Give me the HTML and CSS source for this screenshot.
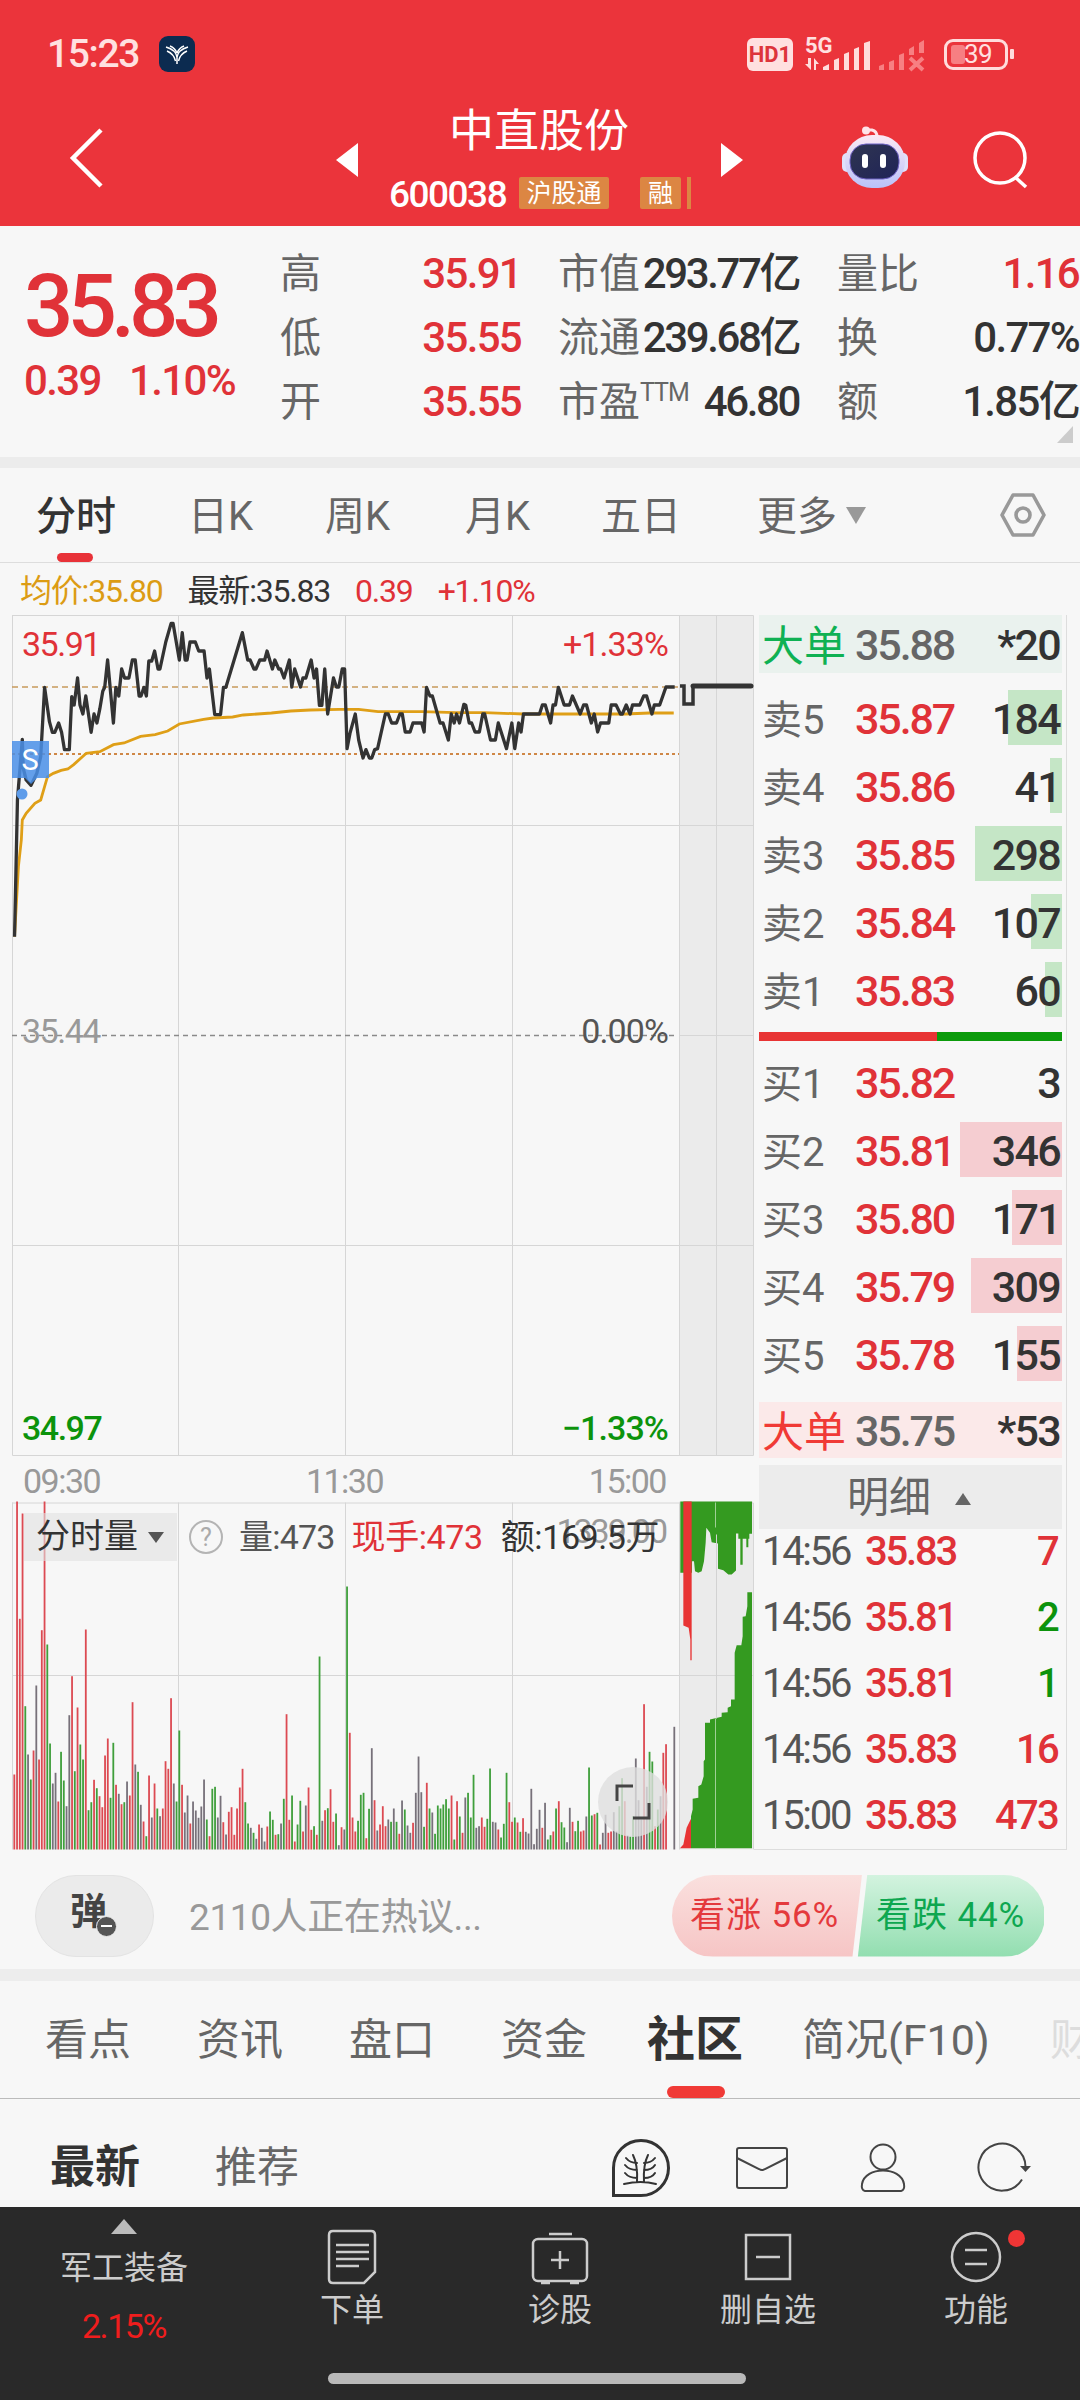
FILE: index.html
```html
<!DOCTYPE html>
<html lang="zh-CN">
<head>
    <meta charset="UTF-8">
    <meta name="viewport" content="width=device-width, initial-scale=1.0">
    <title>中直股份 600038</title>
    <link rel="stylesheet" href="styles.css">
</head>
<body>
    <header class="header">
        <div class="status">
            <span class="clock">15:23</span>
            <svg class="app-icon" width="36" height="36" viewBox="0 0 36 36">
                <rect width="36" height="36" rx="9" fill="#0c2b50"/>
                <g fill="none" stroke="#fff" stroke-width="1.500">
                    <path d="M18 28V21Q17 14 7 11M16.500 25Q15 18 8 15M18 17Q16 12 11 10"/>
                    <path d="M18 21Q19 14 29 11M19.500 25Q21 18 28 15M18 17Q20 12 25 10"/>
                </g>
            </svg>
            <span class="hd">HD1</span>
            <svg class="signal" width="124" height="36" viewBox="0 0 124 36">
                <text x="0" y="17" class="net">5G</text>
                <g fill="#ffdcdc">
                    <path d="M0 28h3v-6h3v12zM9 34v-12l5 6h-3v6z"/>
                    <path d="M18 34v-3l6-3v6zM29 34v-10l5-2v12zM39 34v-16l5-2v18zM49 34v-21l5-2v23zM59 34v-27l6-2v29z"/>
                </g>
                <g fill="#f77f82">
                    <path d="M74 34v-4l5-2v6zM84 34v-8l5-2v10zM94 34v-15l5-2v17zM104 19v-6l5-3v9zM114 17v-10l5-3v13z"/>
                    <path d="M105 22l13 12M118 22l-13 12" stroke="#f77f82" stroke-width="4"/>
                </g>
            </svg>
            <span class="battery"><span class="charge"></span>39</span>
            <span class="nub"></span>
        </div>
        <nav class="nav">
            <svg class="back" width="36" height="62" viewBox="0 0 36 62"><path d="M32 3L4 31l28 28" fill="none" stroke="#fff" stroke-width="4.500"/></svg>
            <svg class="prev" width="23" height="34" viewBox="0 0 23 34"><path d="M0 17L22 0v34z" fill="#fff"/></svg>
            <div class="stock">
                <h1>中直股份</h1>
                <div class="code">
                    <span>600038</span>
                    <em>沪股通</em>
                    <em class="rong">融</em>
                    <i></i>
                </div>
            </div>
            <svg class="next" width="23" height="34" viewBox="0 0 23 34"><path d="M0 0l22 17L0 34z" fill="#fff"/></svg>
            <svg class="robot" width="68" height="64" viewBox="0 0 68 64">
                <defs>
                    <linearGradient id="shell" x1="0" y1="0" x2="0" y2="1"><stop offset="0" stop-color="#fbe9f4"/><stop offset="1" stop-color="#b9c2fa"/></linearGradient>
                    <linearGradient id="face" x1="0" y1="0" x2="1" y2="1"><stop offset="0" stop-color="#2f3550"/><stop offset="1" stop-color="#1f2358"/></linearGradient>
                </defs>
                <path d="M25 4h6q5 1 5 7" fill="none" stroke="#ffe3e8" stroke-width="3"/>
                <circle cx="25" cy="4.500" r="4" fill="#ffe3e8"/>
                <rect x="1" y="27" width="10" height="19" rx="5" fill="#dfe0fa"/>
                <rect x="57" y="27" width="10" height="19" rx="5" fill="#dfe0fa"/>
                <rect x="4" y="9" width="60" height="53" rx="27" fill="url(#shell)"/>
                <rect x="9" y="18" width="49" height="35" rx="16" fill="url(#face)" stroke="#6f62c4"/>
                <rect x="21" y="28" width="6" height="14" rx="3" fill="#fff"/>
                <rect x="39" y="28" width="6" height="14" rx="3" fill="#fff"/>
            </svg>
            <svg class="search" width="56" height="58" viewBox="0 0 56 58"><g fill="none" stroke="#fff" stroke-width="3.500"><circle cx="27" cy="27" r="25"/><path d="M42 46l11 10"/></g></svg>
        </nav>
    </header>

    <section class="quote">
        <div class="price">
            <strong>35.83</strong>
            <div class="change"><span>0.39</span><span>1.10%</span></div>
        </div>
        <dl class="stat col-a">
            <dt>高</dt><dd class="red">35.91</dd>
            <dt>低</dt><dd class="red">35.55</dd>
            <dt>开</dt><dd class="red">35.55</dd>
        </dl>
        <dl class="stat col-b">
            <dt>市值</dt><dd>293.77亿</dd>
            <dt>流通</dt><dd>239.68亿</dd>
            <dt>市盈<sup>TTM</sup></dt><dd>46.80</dd>
        </dl>
        <dl class="stat col-c">
            <dt>量比</dt><dd class="red">1.16</dd>
            <dt>换</dt><dd>0.77%</dd>
            <dt>额</dt><dd>1.85亿</dd>
        </dl>
        <span class="corner"></span>
    </section>

    <nav class="periods">
        <span class="active">分时</span>
        <span>日K</span>
        <span>周K</span>
        <span>月K</span>
        <span>五日</span>
        <span>更多<i class="down"></i></span>
        <svg width="46" height="44" viewBox="0 0 46 44"><g fill="none" stroke="#999" stroke-width="3.600"><path d="M13 2h20l11 20-11 20H13L2 22z" stroke-linejoin="round"/><circle cx="23" cy="22" r="7"/></g></svg>
    </nav>

    <div class="legend">
        <span class="gold">均价:35.80</span>
        <span>最新:35.83</span>
        <span class="red">0.39</span>
        <span class="red">+1.10%</span>
    </div>

    <main class="market">
        <div class="charts">
            <div class="price-chart">
                <svg width="742" height="841" viewBox="12 15 742 841">
                    <rect x="679" y="15" width="74" height="841" fill="#ebebeb"/>
                    <path class="grid" d="M12 15.500H753.500V855.500H12.500V15M178.500 15V855M345.500 15V855M512.500 15V855M679.500 15V855M716.500 15V855M12 225.500H753M12 645.500H753M680 435.500H753"/>
                    <path d="M12 87H679" stroke="#c79a5c" stroke-width="1.500" stroke-dasharray="6 4"/>
                    <path d="M12 154H679" stroke="#cf8746" stroke-width="2" stroke-dasharray="3 3"/>
                    <path d="M12 435.500H677" stroke="#8a8a8a" stroke-width="1.500" stroke-dasharray="5 4"/>
                    <g transform="scale(.4847 .33333)">
                        <polyline class="avg" points="30,1010 38,800 44,720 46,660 54,640 72,610 84,600 92,560 98,530 110,520 126,511 140,507 152,494 178,460 206,455 234,434 256,429 290,409 320,404 346,393 370,372 420,358 440,354 480,351 502,345 560,339 600,333 640,330 700,328 740,328 780,335 870,335 940,338 1000,338 1080,342 1290,342 1340,339 1390,339"/>
                        <polyline class="last" points="30,1010 36,600 46,418 48,505 54,540 64,556 76,520 84,470 92,262 102,365 108,397 113,397 121,369 127,397 133,449 143,449 148,290 153,315 160,234 165,315 171,342 177,288 188,397 194,342 200,369 206,326 212,274 216,262 222,180 234,369 239,262 245,288 251,207 257,234 266,234 273,180 279,180 287,288 291,288 297,262 302,288 307,183 313,183 319,153 326,207 330,207 342,126 353,70 357,70 370,180 376,98 382,180 386,180 392,126 403,126 410,153 421,153 427,234 432,207 443,344 455,344 461,262 466,262 500,98 511,180 516,180 524,207 528,207 536,180 546,180 551,153 562,207 567,180 575,207 579,207 586,234 597,180 602,261 608,207 620,261 625,234 631,234 642,180 648,234 653,207 659,316 664,316 670,207 676,342 688,234 694,261 699,261 706,207 711,207 716,446 722,400 733,342 740,420 749,474 755,449 762,474 767,474 773,449 779,446 795,342 801,342 808,369 818,369 825,342 830,342 836,396 846,396 852,369 870,369 875,396 880,262 887,288 892,288 908,369 914,369 925,420 931,342 937,369 942,342 948,369 957,313 961,316 968,369 973,369 980,396 989,396 996,342 1000,342 1012,420 1022,420 1028,369 1045,446 1056,369 1062,446 1070,369 1075,396 1080,342 1113,342 1119,315 1125,315 1136,369 1141,315 1146,315 1152,262 1164,315 1175,315 1181,288 1197,342 1204,315 1210,315 1220,369 1226,342 1233,396 1239,369 1256,369 1261,315 1271,315 1280,342 1284,342 1292,315 1300,342 1305,315 1320,315 1328,288 1334,288 1345,342 1350,315 1361,315 1374,261 1392,261"/>
                    </g>
                    <path d="M680 86h4v18h9V86" fill="none" stroke="#333" stroke-width="3.500"/>
                    <path d="M693 86h58" stroke="#333" stroke-width="5" stroke-linecap="round"/>
                    <path d="M12 141h37v37H37l-6 6-6-6H12z" fill="#4a8fe8" opacity=".85"/>
                    <circle cx="22" cy="194" r="5.500" fill="#5e9cea"/>
                    <text x="30" y="170" class="sell-mark">S</text>
                </svg>
                <div class="axis">
                    <span class="red">35.91</span><span class="red">+1.33%</span>
                    <span class="gray">35.44</span><span class="dark">0.00%</span>
                    <span class="green">34.97</span><span class="green">−1.33%</span>
                </div>
            </div>
            <div class="times"><span>09:30</span><span>11:30</span><span>15:00</span></div>
            <div class="volume-chart">
                <svg width="742" height="348" viewBox="12 1502.500 742 348">
                    <rect x="679" y="1502" width="74" height="348" fill="#ebebeb"/>
                    <path class="grid" d="M12 1503.500H753.500V1850M12.500 1503V1850M178.500 1503V1850M345.500 1503V1850M512.500 1503V1850M679.500 1503V1850M12 1676H753"/>
                    <g id="bars"></g>
                    <g transform="translate(370 1380) scale(.33333)">
                        <path fill="#349a20" d="M931 366H1146V463H1138V478H1135V503H1129V478H1118V556H1111V478H1105V462H1098V573L1085 585H1075L1060 572 1044 568V492L1025 488 1020 460 1009 445 1007 490 1002 545 995 575 985 580 975 575 972 545H966V580H931Z"/>
                        <path fill="#e83434" d="M940 366H965V842H961V780L956 745 940 738Z"/>
                        <path fill="#349a20" d="M1146 1406V638H1132V680L1127 710 1118 712V770L1114 797H1100L1094 820V960H1083V980L1073 985V998L1055 1000V1012L1020 1020V1030H1005V1140L1001 1145V1190L994 1215 985 1220V1255L968 1258V1290L963 1310V1406Z"/>
                        <path fill="#e83434" d="M930 1406L940 1395 950 1345 963 1318V1406Z"/>
                    </g>
                    <path d="M715.500 1503V1528M715.500 1719V1849" stroke="#9fd095"/>
                    <path d="M716.500 1535V1719" stroke="#d2d2d2"/>
                </svg>
                <div class="volume-info">
                    <span class="picker">分时量<i class="down"></i></span>
                    <span class="help">?</span>
                    <span class="dark">量:473</span>
                    <span class="red">现手:473</span>
                    <span class="amount">额:169.5万</span>
                </div>
                <span class="volume-max">1339.00</span>
                <span class="expand"><svg width="36" height="36" viewBox="0 0 36 36"><path d="M2 17V2h16M34 19v15H18" fill="none" stroke="#444" stroke-width="3"/></svg></span>
            </div>
        </div>

        <aside class="book">
            <div class="big sell"><span>大单</span><b>35.88</b><u>*20</u></div>
            <div class="asks" id="asks"></div>
            <div class="ratio"><i></i></div>
            <div class="bids" id="bids"></div>
            <div class="big buy"><span>大单</span><b>35.75</b><u>*53</u></div>
            <div class="detail">明细<i class="up"></i></div>
            <div class="ticks">
                <div><span>14:56</span><b>35.83</b><u class="red">7</u></div>
                <div><span>14:56</span><b>35.81</b><u class="green">2</u></div>
                <div><span>14:56</span><b>35.81</b><u class="green">1</u></div>
                <div><span>14:56</span><b>35.83</b><u class="red">16</u></div>
                <div><span>15:00</span><b>35.83</b><u class="red">473</u></div>
            </div>
        </aside>
    </main>

    <section class="chat">
        <span class="danmu">弹<i></i></span>
        <span class="hint">2110人正在热议...</span>
        <div class="vote">
            <span class="up-vote">看涨 56%</span>
            <span class="down-vote">看跌 44%</span>
        </div>
    </section>

    <nav class="sections">
        <span>看点</span>
        <span>资讯</span>
        <span>盘口</span>
        <span>资金</span>
        <span class="active">社区</span>
        <span>简况(F10)</span>
        <span class="fade">财</span>
    </nav>

    <div class="feed">
        <b>最新</b>
        <span>推荐</span>
        <svg class="tree" width="58" height="58" viewBox="0 0 58 58"><g fill="none" stroke="#333" stroke-linecap="round"><path d="M1.500 56.500V29A27.500 27.500 0 1 1 29 56.500Z" stroke-width="3"/><path stroke-width="2" d="M12 45q17-4 32 0M25 43q1-17-4-27M32 43q-1-17 4-27M25 24q-7 0-11-5M25 31q-8 0-12-5M25 39q-8 0-12-5M32 24q7 0 11-5M32 31q8 0 11-5M32 39q8 0 11-5"/></g></svg>
        <svg class="mail" width="52" height="42" viewBox="0 0 52 42"><g fill="none" stroke="#444" stroke-width="2"><rect x="1" y="1" width="50" height="40" rx="2"/><path d="M1 11l22 11q3 2 6 0l22-11"/></g></svg>
        <svg class="user" width="46" height="50" viewBox="0 0 46 50"><g fill="none" stroke="#444" stroke-width="2"><circle cx="23" cy="14" r="12.500"/><path d="M5 48q-4-1-3-7c3-18 39-18 42 0q1 6-3 7z"/></g></svg>
        <svg class="reload" width="54" height="50" viewBox="0 0 54 50"><path d="M45 36.500A23.500 23.500 0 1 1 48.500 25" fill="none" stroke="#444" stroke-width="2"/><path d="M43 23h11l-5.500 6z" fill="#444"/></svg>
    </div>

    <footer class="tabbar">
        <div class="items">
            <div class="item index"><i class="up"></i><span>军工装备</span><b>2.15%</b></div>
            <div class="item">
                <svg width="50" height="56" viewBox="0 0 50 56"><g fill="none" stroke="#ccc" stroke-width="2.500"><path d="M6 2h38q4 0 4 4v37L37 54H6q-4 0-4-4V6q0-4 4-4z"/><path d="M9 16h33M9 23h33M9 30h33M9 37h23"/></g></svg>
                <span>下单</span>
            </div>
            <div class="item">
                <svg width="58" height="56" viewBox="0 0 58 56"><g fill="none" stroke="#ccc" stroke-width="2.500"><rect x="2" y="10" width="54" height="42" rx="5"/><path d="M18 5h23M29 22v18M20 31h18M10 54h9M39 54h9"/></g></svg>
                <span>诊股</span>
            </div>
            <div class="item">
                <svg width="50" height="56" viewBox="0 0 50 56"><g fill="none" stroke="#ccc" stroke-width="2.500"><rect x="3" y="6" width="44" height="44"/><path d="M13 28h24"/></g></svg>
                <span>删自选</span>
            </div>
            <div class="item">
                <svg width="52" height="56" viewBox="0 0 52 56"><g fill="none" stroke="#ccc" stroke-width="2.500"><circle cx="26" cy="28" r="24"/><path d="M15 21h22M15 35h22"/></g></svg>
                <span>功能</span>
                <i class="dot"></i>
            </div>
        </div>
        <div class="home"></div>
    </footer>

    <script src="main.js"></script>
</body>
</html>
```
FILE: styles.css
```css
*{
    box-sizing: border-box;
}
body{
    margin: 0;
    width: 1080px;
    height: 2400px;
    overflow: hidden;
    background: #f7f7f7;
    color: #333;
    font-family: Roboto, "Noto Sans CJK SC", sans-serif;
}
h1, dl, dd{
    margin: 0;
}
svg{
    display: block;
    flex: none;
    overflow: visible;
}
i, em, u{
    font-style: normal;
    text-decoration: none;
}
.red{
    color: #e03238;
}
.green{
    color: #0c930c;
}
.gray{
    color: #999;
}
.dark{
    color: #555;
}
.gold{
    color: #dc9c14;
}
.down{
    display: inline-block;
    border: 10px solid transparent;
    border-top: 17px solid #999;
    border-bottom: 0;
}
.up{
    display: inline-block;
    border: 8px solid transparent;
    border-bottom: 12px solid #666;
    border-top: 0;
}

/* header */
.header{
    height: 226px;
    background: #eb343b;
    color: #fff;
}
.status{
    display: flex;
    align-items: center;
    height: 108px;
    padding-left: 47px;
    color: #ffe0e0;
}
.clock{
    width: 112px;
    font-size: 39px;
    font-weight: 500;
    letter-spacing: -1.4px;
}
.hd{
    width: 46px;
    height: 33px;
    margin-left: 552px;
    border-radius: 6px;
    background: #ffe0e0;
    color: #dd343b;
    font: 700 22px/33px Roboto;
    text-align: center;
}
.signal{
    margin-left: 12px;
}
.net{
    font: 700 22px Roboto;
    fill: #ffe0e0;
}
.battery{
    display: flex;
    align-items: center;
    width: 64px;
    height: 31px;
    margin-left: 15px;
    padding-left: 4px;
    border: 3px solid #ffdcdc;
    border-radius: 9px;
    font-size: 26px;
    letter-spacing: -.6px;
}
.charge{
    width: 14px;
    height: 19px;
    margin-right: -1px;
    border-radius: 3px;
    background: #f77f82;
}
.nub{
    width: 4px;
    height: 10px;
    margin-left: 2px;
    border-radius: 1px;
    background: #ffdcdc;
}
.nav{
    display: flex;
    height: 118px;
}
.back{
    margin: 19px 0 0 69px;
}
.prev{
    margin: 35px 0 0 231px;
}
.stock{
    width: 304px;
    margin-left: 30px;
}
.stock h1{
    height: 66px;
    padding-left: 60px;
    font-size: 45px;
    font-weight: 400;
    line-height: 47px;
}
.code{
    display: flex;
    height: 32px;
    font-size: 37px;
    font-weight: 500;
    line-height: 36px;
    margin-top: 3px;
}
.code span{
    width: 130px;
    letter-spacing: -1.5px;
}
.code em{
    width: 90px;
    height: 32px;
    background: #dc8643;
    font-size: 25px;
    font-weight: 400;
    line-height: 33px;
    text-align: center;
    border-radius: 2px;
}
.code .rong{
    width: 41px;
    margin-left: 31px;
}
.code i{
    width: 4px;
    margin-left: 6px;
    background: #dc8643;
}
.next{
    margin: 35px 0 0 28px;
}
.robot{
    margin: 18px 0 0 97px;
}
.search{
    margin: 23px 0 0 64px;
}

/* quote */
.quote{
    position: relative;
    display: flex;
    height: 231px;
    padding-top: 16px;
    font-size: 42px;
    font-weight: 500;
}
.price{
    width: 280px;
    padding-left: 24px;
    color: #e03238;
}
.price strong{
    display: block;
    height: 95px;
    padding-top: 14px;
    font-size: 87px;
    font-weight: 500;
    line-height: 100px;
    letter-spacing: -6px;
}
.change{
    display: flex;
    gap: 28px;
    margin-top: 24px;
    line-height: 40px;
    letter-spacing: -1.6px;
}
.stat{
    display: grid;
    grid-template-columns: 83px 1fr;
    grid-auto-rows: 64px;
    line-height: 64px;
    white-space: nowrap;
}
.stat dt{
    color: #666;
    font-size: 41px;
    font-weight: 400;
}
.stat dd{
    text-align: right;
    letter-spacing: -1.7px;
}
.stat sup{
    font-size: 25px;
    line-height: 0;
    letter-spacing: -1px;
}
.col-a{
    width: 241px;
}
.col-b{
    width: 241px;
    margin-left: 37px;
}
.col-b dd{
    letter-spacing: -2.4px;
}
.col-c{
    width: 242px;
    margin-left: 38px;
}
.corner{
    position: absolute;
    right: 7px;
    bottom: 14px;
    border-left: 16px solid transparent;
    border-bottom: 17px solid #ccc;
}

/* period tabs */
.periods{
    display: grid;
    grid-template-columns: 152px 137px 140px 136px 156px 243px auto;
    align-items: center;
    height: 106px;
    padding-left: 36px;
    border-top: 11px solid #ececec;
    border-bottom: 1px solid #ddd;
    font-size: 40px;
    color: #666;
}
.periods span{
    height: 94px;
    line-height: 97px;
}
.periods .down{
    margin: 0 0 6px 9px;
}
.periods .active{
    color: #333;
    font-weight: 500;
}
.periods .active::after{
    content: "";
    display: block;
    width: 36px;
    height: 9px;
    margin: -12px 0 0 21px;
    border-radius: 5px;
    background: #e83238;
}
.legend{
    display: flex;
    gap: 25px;
    height: 52px;
    padding-left: 20px;
    font-size: 32px;
    line-height: 57px;
    letter-spacing: -1.2px;
}

/* charts */
.market{
    display: flex;
    height: 1235px;
    padding-left: 12px;
}
.charts{
    width: 742px;
}
.grid{
    fill: none;
    stroke: #d6d6d6;
}
.avg, .last{
    fill: none;
    stroke: #df9f17;
    stroke-width: 2.8px;
    vector-effect: non-scaling-stroke;
}
.last{
    stroke: #333;
    stroke-width: 3.3px;
    stroke-linejoin: round;
}
.sell-mark{
    fill: #fff;
    font: 29px Roboto;
    text-anchor: middle;
}
.price-chart, .volume-chart{
    position: relative;
}
.axis{
    position: absolute;
    inset: 0;
    width: 667px;
    padding: 10px 11px 0 10px;
    display: grid;
    grid-template-columns: 1fr 1fr;
    grid-template-rows: 387px 397px 38px;
    font-size: 34px;
    line-height: 38px;
    letter-spacing: -1.5px;
}
.axis span:nth-child(even){
    text-align: right;
    letter-spacing: -.9px;
}
.axis .green{
    font-weight: 500;
}
.times{
    display: flex;
    justify-content: space-between;
    width: 654px;
    height: 46px;
    padding-left: 11px;
    color: #999;
    font-size: 34px;
    line-height: 51px;
    letter-spacing: -1.5px;
}
.volume-info{
    position: absolute;
    top: 11px;
    left: 12px;
    display: flex;
    align-items: center;
    height: 48px;
    font-size: 34px;
    white-space: nowrap;
}
.picker{
    width: 153px;
    height: 48px;
    padding-left: 12px;
    background: rgba(225,225,225,.6);
    line-height: 47px;
}
.picker .down{
    margin: 0 0 5px 10px;
    border-width: 11px 8px 0;
    border-top-color: #555;
}
.help{
    width: 34px;
    height: 34px;
    margin: 0 16px 0 12px;
    border: 2px solid #b4b4b4;
    border-radius: 50%;
    color: #aaa;
    font-size: 25px;
    line-height: 31px;
    text-align: center;
}
.volume-info .dark, .volume-info .red, .amount{
    line-height: 48px;
    letter-spacing: -.8px;
}
.volume-info .red{
    margin: 0 18px 0 17px;
    letter-spacing: -.4px;
}
.volume-info .amount{
    letter-spacing: -.4px;
}
.volume-max{
    position: absolute;
    top: 9px;
    right: 88px;
    color: #999;
    font-size: 34px;
    letter-spacing: -2px;
    z-index: -1;
}
.expand{
    position: absolute;
    left: 586px;
    top: 265px;
    display: flex;
    align-items: center;
    justify-content: center;
    width: 70px;
    height: 70px;
    border-radius: 50%;
    background: rgba(222,222,222,.8);
}

/* order book */
.book{
    width: 313px;
    padding-left: 5px;
    border-right: 1px solid #ddd;
    border-bottom: 1px solid #ddd;
}
.book b, .book u{
    font-size: 43px;
    font-weight: 500;
    letter-spacing: -2.1px;
}
.book b{
    width: 106px;
    color: #e03238;
}
.book u{
    flex: 1;
    padding-right: 2px;
    text-align: right;
    letter-spacing: -1.7px;
}
.level, .big, .ticks div{
    display: flex;
    align-items: center;
    width: 303px;
    padding-left: 3px;
}
.level{
    position: relative;
    height: 55px;
    margin-bottom: 13px;
    padding-top: 2px;
    color: #666;
    font-size: 40px;
}
.level span, .big span{
    width: 93px;
}
.level span{
    margin-top: -3px;
}
.level u, .big u{
    position: relative;
    color: #333;
}
.level i{
    position: absolute;
    top: 0;
    right: 0;
    height: 55px;
    background: #c5e6c6;
}
.bids .level i{
    background: #f5cdd1;
}
.asks, .bids{
    display: flow-root;
}
.asks{
    padding-top: 17px;
}
.ratio{
    width: 303px;
    height: 9px;
    margin: 2px 0 13px;
    background: #0b9b0b;
}
.ratio i{
    display: block;
    width: 178px;
    height: 9px;
    background: #e83434;
}
.big{
    height: 58px;
    padding-top: 2px;
    background: #eaf2ee;
    color: #0fb153;
    font-size: 42px;
}
.big span{
    margin-top: -5px;
}
.big b{
    color: #666;
}
.big.buy{
    height: 56px;
    margin-top: 8px;
    background: #fbe9e9;
    color: #f03a36;
}
.detail{
    width: 303px;
    height: 64px;
    margin-top: 7px;
    padding-left: 88px;
    background: #ececec;
    color: #666;
    font-size: 42px;
    line-height: 66px;
}
.detail .up{
    margin: 0 0 7px 24px;
}
.ticks div{
    height: 66px;
    color: #555;
    font-size: 40px;
}
.ticks{
    margin-top: -11px;
}
.ticks span{
    width: 103px;
    letter-spacing: -2.3px;
}
.ticks b, .ticks u{
    font-size: 40px;
    letter-spacing: -2.2px;
}
.ticks u{
    padding-right: 4px;
    letter-spacing: -1.7px;
}

/* chat */
.chat{
    display: flex;
    align-items: center;
    height: 131px;
    padding: 0 35px 0 35px;
    border-bottom: 12px solid #ededed;
}
.danmu{
    position: relative;
    width: 119px;
    height: 82px;
    margin-top: 12px;
    border: 1px solid #e3e3e3;
    border-radius: 41px;
    background: #ebebeb;
    font-size: 37px;
    font-weight: 700;
    line-height: 73px;
    padding-left: 34px;
    color: #444;
}
.danmu i{
    position: absolute;
    left: 60px;
    top: 40px;
    width: 21px;
    height: 21px;
    border: 1px solid #ebebeb;
    border-radius: 50%;
    background: linear-gradient(#fff, #fff) center / 11px 2px no-repeat #555;
}
.hint{
    margin: 8px 0 0 35px;
    color: #999;
    font-size: 37px;
    letter-spacing: -.4px;
}
.vote{
    display: flex;
    width: 373px;
    height: 82px;
    margin: 12px 0 0 auto;
    border-radius: 41px;
    overflow: hidden;
    font-size: 35px;
    line-height: 82px;
}
.vote span{
    white-space: pre;
    letter-spacing: .9px;
}
.up-vote{
    width: 190px;
    padding-left: 18px;
    background: linear-gradient(#fae0de, #f6c5c5);
    color: #e4393c;
    clip-path: polygon(0 0, 100% 0, 95% 100%, 0 100%);
}
.down-vote{
    width: 188px;
    margin-left: -6px;
    padding-left: 20px;
    background: linear-gradient(#d3f3df, #92deb0);
    color: #0ea750;
    clip-path: polygon(6% 0, 100% 0, 100% 100%, 1% 100%);
}

/* section tabs */
.sections{
    display: grid;
    grid-template-columns: 152px 152px 152px 146px 155px 248px 60px;
    height: 118px;
    padding-left: 45px;
    border-bottom: 1px solid #bbb;
    color: #666;
    font-size: 43px;
    line-height: 118px;
    white-space: nowrap;
    overflow: hidden;
}
.sections .active{
    color: #333;
    font-size: 48px;
    font-weight: 700;
}
.sections .active::after{
    content: "";
    display: block;
    width: 58px;
    height: 12px;
    margin: -13px 0 0 20px;
    border-radius: 6px;
    background: #f03a36;
}
.sections .fade{
    color: #ddd;
}
.feed{
    display: flex;
    align-items: center;
    height: 108px;
    padding: 29px 0 0 50px;
    font-size: 42px;
}
.feed b{
    width: 165px;
    font-size: 45px;
    line-height: 50px;
}
.feed span{
    width: 397px;
    color: #666;
    line-height: 50px;
}
.mail{
    margin-left: 66px;
}
.user{
    margin-left: 72px;
}
.reload{
    margin-left: 71px;
}

/* bottom bar */
.tabbar{
    height: 193px;
    background: #292929;
    color: #ccc;
}
.items{
    display: grid;
    grid-template-columns: 248px repeat(4, 208px);
    height: 166px;
}
.item{
    position: relative;
    display: flex;
    flex-direction: column;
    align-items: center;
    padding-top: 22px;
    font-size: 32px;
    line-height: 40px;
    white-space: nowrap;
}
.item svg{
    margin-bottom: 5px;
}
.index{
    padding-top: 12px;
}
.index .up{
    border-width: 0 13px 15px;
    border-bottom-color: #bbb;
}
.index span{
    margin-top: 14px;
}
.index b{
    margin-top: 18px;
    color: #f01d1d;
    font-size: 34px;
    font-weight: 400;
    letter-spacing: -1.4px;
}
.dot{
    position: absolute;
    left: 136px;
    top: 23px;
    width: 17px;
    height: 17px;
    border-radius: 50%;
    background: #f03535;
}
.home{
    width: 418px;
    height: 11px;
    margin-left: 328px;
    border-radius: 6px;
    background: #b9b9b9;
}
```
FILE: main.js
```js
// colour and top edge of every minute bar, r = up, g = down, k = flat
const minutes = `r1185 r366 r718 r402 g980 k1125 g1200 r1113 k918 r1140 r752 r366 g795 g1092 k1212 k1180 r1266 g1117 g1203 k1280
k1007 r890 g1175 r984 g1095 g1140 r750 g1292 g1268 r1201 g1226 r1250 r1283 r1128 r1077 g1255 g1090 r1216 k1243 r1274
g1268 k1206 r1248 r968 k1155 g1177 k1276 r1326 g1370 r1188 k1314 r1212 g1287 k1310 r1287 r1145 r1168 r956 k1212 g1266
g1053 r1216 k1299 k1248 r1332 k1266 k1293 k1315 k1281 k1200 g1320 r1370 g1228 g1222 k1314 k1249 r1328 k1365 r1297 r1283
r1366 r1287 r1224 r1168 g1268 g1332 k1345 g1360 k1378 r1335 k1345 k1386 r1341 g1296 g1321 r1366 g1364 k1332 g1258 r1004
r1321 g1248 r1386 g1335 g1264 r1356 k1278 r1224 r1351 g1340 r1366 g831 k1324 r1292 g1286 r1229 r1327 g1302 k1397 r1343
k1350 g621 r1060 r1314 r1356 g1324 g1246 g1240 r1376 g1288 k1106 r1262 k1353 r1335 r1280 r1340 k1320 g1327 k1287 g1327
r1363 k1263 g1290 k1338 k1360 r1330 k1240 k1131 k1238 g1342 r1210 g1287 k1299 g1363 g1278 g1287 g1275 g1259 g1287 r1248
g1380 r1265 g1311 r1360 k1254 g1240 g1314 g1186 k1345 k1340 r1314 r1342 g1318 g1167 k1327 k1329 r1350 g1374 g1333 g1180
r1268 r1327 g1314 r1329 g1357 r1316 k1357 k1362 k1228 k1394 k1348 k1291 r1345 k1270 g1380 g1367 r1356 g1287 r1265 g1328
g1344 k1388 k1285 r1327 g1355 g1324 r1356 r1353 k1311 g1164 g1308 r1304 g1300 r1395 k1360 k1306 r1360 r1356 k1298 k1356
g1280 g1196 r1265 k1368 g1371 g1310 k1137 k1262 k1320 r974 k1222 g1117 g1146 r1340 g1290 k1250 r1120 r1094 k1410 k1410 k1042`.split(/\s+/);
const colors = { r: '#dc4a52', g: '#3f9f3b', k: '#77717a' };

document.getElementById('bars').innerHTML = minutes.map((m, i) => {
    const x = 14.3 + i * 2.75;
    const y = 1380 + m.slice(1) / 3;
    return `<rect x="${(x - 0.9).toFixed(2)}" y="${y.toFixed(1)}" width="1.8" height="${(1850 - y).toFixed(1)}" fill="${colors[m[0]]}"/>`;
}).join('');

// label, price, lots, bar width
const asks = [
    ['卖5', '35.87', 184, 54],
    ['卖4', '35.86', 41, 12],
    ['卖3', '35.85', 298, 87],
    ['卖2', '35.84', 107, 31],
    ['卖1', '35.83', 60, 17]
];
const bids = [
    ['买1', '35.82', 3, 0],
    ['买2', '35.81', 346, 102],
    ['买3', '35.80', 171, 50],
    ['买4', '35.79', 309, 91],
    ['买5', '35.78', 155, 45]
];

function levels(id, rows) {
    document.getElementById(id).innerHTML = rows.map(r =>
        `<div class="level"><i style="width:${r[3]}px"></i><span>${r[0]}</span><b>${r[1]}</b><u>${r[2]}</u></div>`
    ).join('');
}

levels('asks', asks);
levels('bids', bids);
```
